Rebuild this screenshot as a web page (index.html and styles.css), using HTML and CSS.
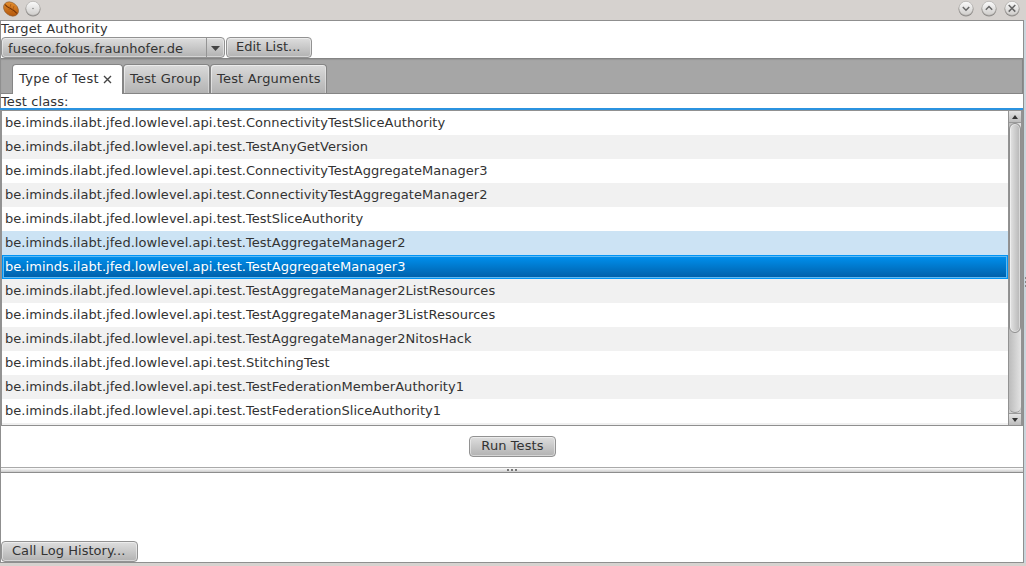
FILE: index.html
```
<!DOCTYPE html>
<html lang="en">
<head>
<meta charset="utf-8">
<title>Test Runner</title>
<link rel="stylesheet" href="styles.css">
</head>
<body>
<div class="window">
  <header class="titlebar">
    <svg class="app-icon" width="18" height="18" viewBox="0 0 18 18">
      <defs><linearGradient id="nut" x1="0" y1="0" x2="1" y2="1"><stop offset="0" stop-color="#ef9a35"/><stop offset="1" stop-color="#a84b05"/></linearGradient></defs>
      <ellipse cx="9" cy="9" rx="8.2" ry="6.3" transform="rotate(40 9 9)" fill="url(#nut)" stroke="#8a5a30" stroke-width=".6"/>
      <path d="M3 4.500C6 9 11 8 15 13.500" fill="none" stroke="#713207" stroke-width="1.200"/>
      <path d="M9 4L7 10M12 6L10 12" fill="none" stroke="#a35312" stroke-width=".7"/>
    </svg>
    <svg class="round" width="18" height="18" viewBox="0 0 18 18"><use href="#knob"/><circle cx="9" cy="8.500" r=".8" fill="#888"/></svg>
    <span class="spring"></span>
    <svg class="round" width="18" height="18" viewBox="0 0 18 18">
      <defs>
        <linearGradient id="face" x1="0" y1="0" x2="0" y2="1"><stop offset="0" stop-color="#fbfbfb"/><stop offset="1" stop-color="#cfcdcb"/></linearGradient>
        <g id="knob"><circle cx="9" cy="9" r="7.500" fill="#8e8b89"/><circle cx="9" cy="8.300" r="7" fill="url(#face)" stroke="#aaa7a5" stroke-width=".6"/></g>
      </defs>
      <use href="#knob"/><path d="M5.800 7L9 10.200L12.200 7" class="mark"/></svg>
    <svg class="round" width="18" height="18" viewBox="0 0 18 18"><use href="#knob"/><path d="M5.800 9.700L9 6.500L12.200 9.700" class="mark"/></svg>
    <svg class="round" width="18" height="18" viewBox="0 0 18 18"><use href="#knob"/><path d="M5.700 5L12.300 11.600M12.300 5L5.700 11.600" class="mark"/></svg>
  </header>
  <main class="content">
    <div class="authority-label">Target Authority</div>
    <div class="toolbar">
      <div class="btn combo"><span class="combo-value">fuseco.fokus.fraunhofer.de</span><span class="combo-arrow"><svg width="9" height="5" viewBox="0 0 9 5"><path d="M0 0H9L4.500 5Z" fill="#444"/></svg></span></div>
      <div class="btn edit">Edit List...</div>
    </div>
    <nav class="tabs">
      <div class="tab active">Type of Test<svg class="close" width="9" height="9" viewBox="0 0 9 9"><path d="M1 1L8 8M8 1L1 8" stroke="#444" stroke-width="1.400"/></svg></div>
      <div class="tab group">Test Group</div>
      <div class="tab arguments">Test Arguments</div>
    </nav>
    <div class="class-label">Test class:</div>
    <section class="list">
      <div class="rows">
        <div class="row">be.iminds.ilabt.jfed.lowlevel.api.test.ConnectivityTestSliceAuthority</div>
        <div class="row">be.iminds.ilabt.jfed.lowlevel.api.test.TestAnyGetVersion</div>
        <div class="row">be.iminds.ilabt.jfed.lowlevel.api.test.ConnectivityTestAggregateManager3</div>
        <div class="row">be.iminds.ilabt.jfed.lowlevel.api.test.ConnectivityTestAggregateManager2</div>
        <div class="row">be.iminds.ilabt.jfed.lowlevel.api.test.TestSliceAuthority</div>
        <div class="row hover">be.iminds.ilabt.jfed.lowlevel.api.test.TestAggregateManager2</div>
        <div class="row selected">be.iminds.ilabt.jfed.lowlevel.api.test.TestAggregateManager3</div>
        <div class="row">be.iminds.ilabt.jfed.lowlevel.api.test.TestAggregateManager2ListResources</div>
        <div class="row">be.iminds.ilabt.jfed.lowlevel.api.test.TestAggregateManager3ListResources</div>
        <div class="row">be.iminds.ilabt.jfed.lowlevel.api.test.TestAggregateManager2NitosHack</div>
        <div class="row">be.iminds.ilabt.jfed.lowlevel.api.test.StitchingTest</div>
        <div class="row">be.iminds.ilabt.jfed.lowlevel.api.test.TestFederationMemberAuthority1</div>
        <div class="row">be.iminds.ilabt.jfed.lowlevel.api.test.TestFederationSliceAuthority1</div>
      </div>
      <div class="scrollbar">
        <div class="arrow"><svg width="6" height="4" viewBox="0 0 6 4"><path d="M0 4L3 0L6 4Z" fill="#333"/></svg></div>
        <div class="track"><div class="thumb"></div></div>
        <div class="arrow"><svg width="6" height="4" viewBox="0 0 6 4"><path d="M0 0L3 4L6 0Z" fill="#333"/></svg></div>
      </div>
    </section>
    <div class="actions"><div class="btn run">Run Tests</div></div>
    <div class="divider"><i></i><i></i><i></i></div>
    <section class="log"><div class="btn history">Call Log History...</div></section>
  </main>
  <aside class="edge"><i></i><i></i><i></i></aside>
  <footer class="bottom-edge"></footer>
</div>
</body>
</html>
```

FILE: styles.css
```
* { box-sizing: border-box; }
body { margin: 0; background: #fff; color: #333; font: 13px/16px "DejaVu Sans", sans-serif; letter-spacing: .045px; overflow: hidden; }
.window { width: 1026px; height: 566px; display: grid; grid-template: 20px 543px 3px / 1024px 2px; white-space: nowrap; }
svg { display: block; flex: none; }

.titlebar { grid-column: 1 / 3; background: #d6d2cf; display: flex; align-items: flex-start; gap: 5px; padding: 0 5px 0 2px; }
.app-icon { margin-right: -1px; }
.round { overflow: visible; }
.spring { flex: 1; }
.mark { fill: none; stroke: #666; stroke-width: 1.500; }

.content { border: 1px solid #8f8f8f; display: flex; flex-direction: column; }
.authority-label { height: 16px; letter-spacing: .14px; }
.toolbar { height: 21px; display: flex; gap: 1px; }
.btn { height: 21px; border: 1px solid #929292; border-radius: 4px; background: linear-gradient(#dedede, #b2b2b2); box-shadow: inset 0 0 0 1px rgba(255,255,255,.45); display: flex; justify-content: center; line-height: 17px; }
.combo { width: 224px; justify-content: space-between; letter-spacing: .08px; }
.combo-value { padding: 1px 0 0 6px; line-height: 19px; }
.combo-arrow { width: 18px; border-left: 1px solid #949494; display: flex; align-items: center; justify-content: center; padding-top: 1px; }
.edit { width: 86px; justify-content: flex-start; padding-left: 9px; letter-spacing: 0; }

.tabs { height: 36px; background: #a6a6a6; border: 1px solid #858585; border-left: 0; box-shadow: inset 0 1px 1px #969696; display: flex; align-items: flex-end; padding-left: 11px; }
.tab { height: 29px; border: 1px solid #858585; border-bottom: 0; border-radius: 4px 4px 0 0; background: linear-gradient(#dadada, #b3b3b3); box-shadow: inset 1px 1px 0 rgba(255,255,255,.5), inset -1px 0 0 rgba(255,255,255,.35); line-height: 27px; padding-left: 6px; letter-spacing: .2px; }
.active { width: 111px; height: 30px; margin-bottom: -1px; background: #fff; display: flex; gap: 4px; letter-spacing: .3px; }
.close { margin-top: 10px; }
.group { width: 87px; }
.arguments { width: 117px; }

.class-label { height: 14px; line-height: 15px; letter-spacing: .1px; }
.list { height: 318px; margin-left: -1px; border-top: 2px solid #2b93e0; background: #f0f0f0; display: flex; box-shadow: inset 0 1px #919191, inset 2px 0 #929292, inset 0 -1px #8f8f8f; padding: 1px 0 1px 2px; }
.rows { width: 1006px; }
.row { height: 24px; padding-left: 3px; line-height: 23px; background: #fff; }
.row:nth-child(even) { background: #f1f1f1; }
.row.hover { background: #cce3f4; }
.row.selected { color: #fff; background: linear-gradient(#0091ef, #005fa8); border: 1px solid #0095f5; box-shadow: inset 0 0 0 1px #5eb9f4; padding-left: 2px; line-height: 21px; }
.scrollbar { width: 15px; border: solid #929292; border-width: 0 2px 0 1px; display: flex; flex-direction: column; background: #cfcfcf; }
.arrow { height: 12px; border-bottom: 1px solid #999; background: linear-gradient(#e3e3e3, #bcbcbc); display: flex; align-items: center; justify-content: center; }
.arrow:last-child { border-top: 1px solid #999; border-bottom: 0; }
.track { flex: 1; background: linear-gradient(90deg, #bcbcbc, #e3e3e3); border-bottom: 1px solid #999; border-radius: 0 0 6px 6px; }
.thumb { height: 210px; border: 1px solid #8f8f8f; border-radius: 6px; background: linear-gradient(90deg, #e4e4e4, #b6b6b6); box-shadow: inset 0 0 0 1px rgba(255,255,255,.45); }

.actions { height: 41px; display: flex; justify-content: center; padding: 10px 0 0 1px; }
.run { width: 87px; letter-spacing: .1px; }
.divider { height: 6px; border-top: 1px solid #aaa; border-bottom: 1px solid #8d8d8d; background: linear-gradient(#fff, #ccc); display: flex; justify-content: center; align-items: center; gap: 2px; }
.divider i { width: 2px; height: 2px; background: #777; }
.log { flex: 1; display: flex; align-items: flex-end; }
.history { width: 137px; justify-content: flex-start; padding-left: 10px; }
.edge { background: #cad5dc; display: flex; flex-direction: column; align-items: flex-end; justify-content: center; gap: 2px; padding-bottom: 20px; }
.edge i { width: 1px; height: 2px; background: #888; }
.bottom-edge { grid-column: 1 / 3; background: #d6d2cf; }
```
